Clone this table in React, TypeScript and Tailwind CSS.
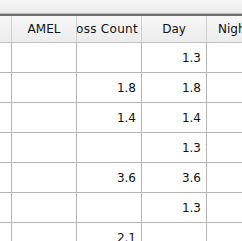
import React from "react";

const cols = ["", "AMEL", "Gross Count", "Day", "Night"];

const rows: string[][] = [
  ["", "", "", "1.3", ""],
  ["", "", "1.8", "1.8", ""],
  ["", "", "1.4", "1.4", ""],
  ["", "", "", "1.3", ""],
  ["", "", "3.6", "3.6", ""],
  ["", "", "", "1.3", ""],
  ["", "", "2.1", "", ""],
];

const widths = ["w-[12px]", "w-[65px]", "w-[65px]", "w-[65px]", "w-[65px]"];

export default function App() {
  return (
    <div
      className="w-[242px] h-[241px] overflow-hidden bg-white"
      style={{ fontFamily: '"DejaVu Sans", sans-serif' }}
    >
      <div className="h-[13px] bg-gradient-to-b from-[#f6f6f6] to-[#ebebeb]" />
      <div className="h-px bg-[#bdbdbd]" />
      <div className="h-[2px] bg-[#6f6f6f]" />

      {/* header */}
      <div className="flex h-[27px] border-b border-[#c2c2c2] bg-gradient-to-b from-[#f7f7f7] to-[#ececec]">
        {cols.map((c, i) => (
          <div
            key={i}
            className={`${widths[i]} shrink-0 flex items-center overflow-hidden whitespace-nowrap text-[12px] text-[#111] border-r border-[#cfcfcf] ${
              i === 2
                ? "justify-end pr-[3px] tracking-[0.3px]"
                : i === 4
                  ? "justify-start pl-[11px]"
                  : "justify-center"
            }`}
          >
            {c}
          </div>
        ))}
      </div>

      {/* body */}
      {rows.map((r, ri) => (
        <div key={ri} className="flex h-[30px] border-b border-[#b5b5b5]">
          {r.map((v, ci) => (
            <div
              key={ci}
              className={`${widths[ci]} shrink-0 flex items-center justify-end pr-[5px] text-[12px] text-[#111] border-r border-[#b5b5b5]`}
            >
              {v}
            </div>
          ))}
        </div>
      ))}
    </div>
  );
}
